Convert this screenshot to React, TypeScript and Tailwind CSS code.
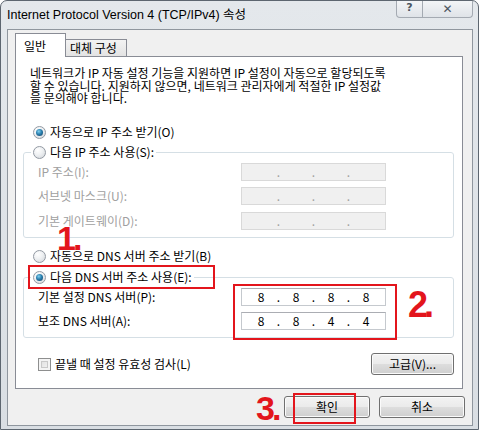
import React from "react";

function Radio({ checked }: { checked?: boolean }) {
  return (
    <span className="flex h-[13px] w-[13px] shrink-0 items-center justify-center rounded-full border border-[#939aa3] bg-[radial-gradient(circle_at_35%_30%,#ffffff_0%,#eef0f2_45%,#cfd3d8_100%)]">
      {checked && (
        <span className="h-[7px] w-[7px] rounded-full bg-[radial-gradient(circle_at_40%_35%,#7fd0f0_0%,#2a7fae_45%,#123a5c_100%)]" />
      )}
    </span>
  );
}

function IpBox({ values, disabled }: { values: string[]; disabled?: boolean }) {
  return (
    <div
      className={
        disabled
          ? "flex h-[18px] w-[145px] items-center border border-[#d9d9d9] bg-[#f0f0f0] pl-[6px] text-[#a0a0a0]"
          : "flex h-[18px] w-[145px] items-center border border-[#c5c9ce] border-t-[#abadb3] bg-white pl-[6px] text-black"
      }
    >
      {values.map((v, i) => (
        <React.Fragment key={i}>
          <span className="w-[26px] text-center leading-[16px]">{v}</span>
          {i < 3 && <span className="w-[9px] text-center leading-[16px]">.</span>}
        </React.Fragment>
      ))}
    </div>
  );
}

function Btn({ label, w }: { label: string; w: string }) {
  return (
    <div
      className={
        w +
        " flex h-[22px] items-center justify-center rounded-[3px] border border-[#707070] bg-[linear-gradient(to_bottom,#f3f3f3_0%,#ebebeb_48%,#dddddd_52%,#cfcfcf_100%)] text-[12px] leading-[16px] text-black shadow-[inset_0_0_0_1px_#fbfbfb]"
      }
    >
      {label}
    </div>
  );
}

export default function App() {
  return (
    <div className="relative h-[430px] w-[479px] overflow-hidden rounded-t-[7px] border border-[#5d6670] bg-[linear-gradient(to_bottom,#e4e8ec,#d9dee3)] font-['Noto_Sans_CJK_KR','Liberation_Sans',sans-serif] text-[12px] text-black">
      {/* Title bar */}
      <div className="flex h-[28px] items-start">
        <div className="flex h-[28px] flex-1 items-center pl-[6px] font-['Liberation_Sans','Noto_Sans_CJK_KR',sans-serif] text-[12.5px] text-black">
          Internet Protocol Version 4 (TCP/IPv4) 속성
        </div>
        <div className="-mt-px mr-[5px] flex h-[18px] overflow-hidden rounded-b-[4px] border border-t-0 border-[#a4aab2] bg-[linear-gradient(to_bottom,#f4f6f8,#dfe3e8)]">
          <div className="flex w-[26px] items-center justify-center border-r border-[#a4aab2] font-['DejaVu_Sans',sans-serif] text-[11px] font-bold text-[#4b5560]">
            ?
          </div>
          <div className="flex w-[49px] items-center justify-center font-['DejaVu_Sans',sans-serif] text-[12px] font-bold text-[#4b5560]">
            ✕
          </div>
        </div>
      </div>

      {/* Client area */}
      <div className="ml-[6px] mr-[5px] flex h-[397px] flex-col border border-[#8f969e] bg-[#f0f0f0] pt-[3px]">
        {/* Tabs */}
        <div className="flex items-end pl-[7px]">
          <div className="relative z-10 -mb-px flex h-[24px] w-[51px] items-start border border-b-0 border-[#898c95] bg-white pl-[8px] pt-[4px] leading-[16px]">
            일반
          </div>
          <div className="flex h-[17px] w-[61px] items-center border border-b-0 border-l-0 border-[#898c95] bg-[linear-gradient(to_bottom,#f3f3f3,#e3e3e3)] pl-[4px] leading-[16px]">
            대체 구성
          </div>
        </div>

        {/* Panel */}
        <div className="ml-[7px] flex h-[333px] w-[448px] flex-col border border-[#898c95] bg-white">
          <p className="mt-[10px] h-[38px] whitespace-nowrap pl-[14px] leading-[12.5px]">
            네트워크가 IP 자동 설정 기능을 지원하면 IP 설정이 자동으로 할당되도록
            <br />
            할 수 있습니다. 지원하지 않으면, 네트워크 관리자에게 적절한 IP 설정값
            <br />
            을 문의해야 합니다.
          </p>

          <div className="ml-[17px] mt-[19px] flex h-[16px] items-center gap-[4px] leading-[16px]">
            <Radio checked />
            <span>자동으로 IP 주소 받기(O)</span>
          </div>

          <fieldset className="ml-[7px] mt-[4px] w-[431px] rounded-[3px] border border-[#d5dfe5] pb-[7px]">
            <legend className="ml-[7px] flex h-[16px] items-center gap-[4px] px-[2px] leading-[16px]">
              <Radio />
              <span>다음 IP 주소 사용(S):</span>
            </legend>
            <div className="mt-[3px] flex items-center pl-[14px] text-[#a0a0a0]">
              <span className="w-[203px] leading-[16px]">IP 주소(I):</span>
              <IpBox values={["", "", "", ""]} disabled />
            </div>
            <div className="mt-[6px] flex items-center pl-[14px] text-[#a0a0a0]">
              <span className="w-[203px] leading-[16px]">서브넷 마스크(U):</span>
              <IpBox values={["", "", "", ""]} disabled />
            </div>
            <div className="mt-[7px] flex items-center pl-[14px] text-[#a0a0a0]">
              <span className="w-[203px] leading-[16px]">기본 게이트웨이(D):</span>
              <IpBox values={["", "", "", ""]} disabled />
            </div>
          </fieldset>

          <div className="ml-[17px] mt-[10px] flex h-[16px] items-center gap-[4px] leading-[16px]">
            <Radio />
            <span>자동으로 DNS 서버 주소 받기(B)</span>
          </div>

          <fieldset className="ml-[7px] mt-[5px] w-[431px] rounded-[3px] border border-[#d5dfe5] pb-[7px]">
            <legend className="ml-[7px] flex h-[16px] items-center gap-[4px] px-[2px] leading-[16px]">
              <Radio checked />
              <span>다음 DNS 서버 주소 사용(E):</span>
            </legend>
            <div className="mt-[3px] flex items-center pl-[14px]">
              <span className="w-[203px] leading-[16px]">기본 설정 DNS 서버(P):</span>
              <IpBox values={["8", "8", "8", "8"]} />
            </div>
            <div className="mt-[6px] flex items-center pl-[14px]">
              <span className="w-[203px] leading-[16px]">보조 DNS 서버(A):</span>
              <IpBox values={["8", "8", "4", "4"]} />
            </div>
          </fieldset>

          <div className="ml-[22px] mr-[8px] mt-[15px] flex h-[22px] items-center justify-between">
            <div className="flex items-center gap-[4px] leading-[16px]">
              <span className="h-[13px] w-[13px] border border-[#8e8f8f] bg-[linear-gradient(135deg,#dcdcdc,#f7f7f7)] shadow-[inset_0_0_0_2px_#f4f4f4,inset_0_0_0_3px_#c9c9c9]" />
              <span>끝낼 때 설정 유효성 검사(L)</span>
            </div>
            <Btn label="고급(V)..." w="w-[83px]" />
          </div>
        </div>

        {/* Bottom buttons */}
        <div className="mr-[7px] mt-[7px] flex justify-end gap-[9px]">
          <Btn label="확인" w="w-[86px]" />
          <Btn label="취소" w="w-[86px]" />
        </div>
      </div>

      {/* Annotations */}
      <div className="absolute left-[56px] top-[220px] font-['Liberation_Sans',sans-serif] text-[34px] font-bold leading-[34px] tracking-[-3px] text-[#e3151c]">
        1.
      </div>
      <div className="absolute left-[407px] top-[286px] font-['Liberation_Sans',sans-serif] text-[36px] font-bold leading-[36px] tracking-[-4px] text-[#e3151c]">
        2.
      </div>
      <div className="absolute left-[255px] top-[390px] font-['Liberation_Sans',sans-serif] text-[34px] font-bold leading-[34px] tracking-[-3px] text-[#e3151c]">
        3.
      </div>
      <div className="absolute left-[27px] top-[264px] h-[24px] w-[187px] border-2 border-[#e3151c]" />
      <div className="absolute left-[232px] top-[283px] h-[56px] w-[164px] border-2 border-[#e3151c]" />
      <div className="absolute left-[292px] top-[392px] h-[31px] w-[63px] border-2 border-[#e3151c]" />
    </div>
  );
}
